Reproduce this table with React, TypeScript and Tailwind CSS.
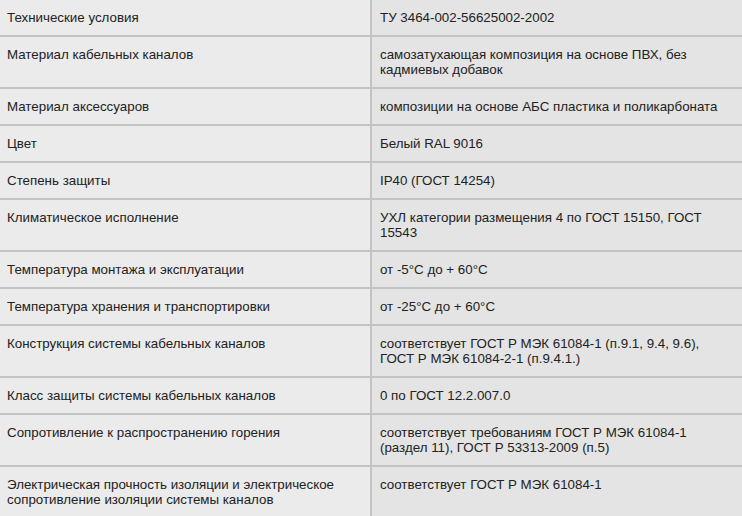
import React from 'react';

const rows: [string, string][] = [
  ['Технические условия', 'ТУ 3464-002-56625002-2002'],
  ['Материал кабельных каналов', 'самозатухающая композиция на основе ПВХ, без кадмиевых добавок'],
  ['Материал аксессуаров', 'композиции на основе АБС пластика и поликарбоната'],
  ['Цвет', 'Белый RAL 9016'],
  ['Степень защиты', 'IP40 (ГОСТ 14254)'],
  ['Климатическое исполнение', 'УХЛ категории размещения 4 по ГОСТ 15150, ГОСТ 15543'],
  ['Температура монтажа и эксплуатации', 'от -5°C до + 60°C'],
  ['Температура хранения и транспортировки', 'от -25°C до + 60°C'],
  ['Конструкция системы кабельных каналов', 'соответствует ГОСТ Р МЭК 61084-1 (п.9.1, 9.4, 9.6), ГОСТ Р МЭК 61084-2-1 (п.9.4.1.)'],
  ['Класс защиты системы кабельных каналов', '0 по ГОСТ 12.2.007.0'],
  ['Сопротивление к распространению горения', 'соответствует требованиям ГОСТ Р МЭК 61084-1 (раздел 11), ГОСТ Р 53313-2009 (п.5)'],
  ['Электрическая прочность изоляции и электрическое сопротивление изоляции системы каналов', 'соответствует ГОСТ Р МЭК 61084-1'],
];

const App: React.FC = () => {
  return (
    <div className="w-[742px] h-[516px] overflow-hidden bg-[#ebebeb]">
      <div
        className="grid grid-cols-[370px_370px] gap-[2px] bg-[#c3c3c3] text-[13.33px] leading-[15px] text-[#222]"
        style={{ fontFamily: '"Liberation Sans", Arial, sans-serif' }}
      >
        {rows.map(([label, value]) => (
          <React.Fragment key={label}>
            <div className="bg-[#ebebeb] pl-[7px] pr-[8px] pt-[10px] pb-[10px]">{label}</div>
            <div className="bg-[#e4e4e4] pl-[8px] pr-[8px] pt-[10px] pb-[10px]">{value}</div>
          </React.Fragment>
        ))}
      </div>
    </div>
  );
};

export default App;
